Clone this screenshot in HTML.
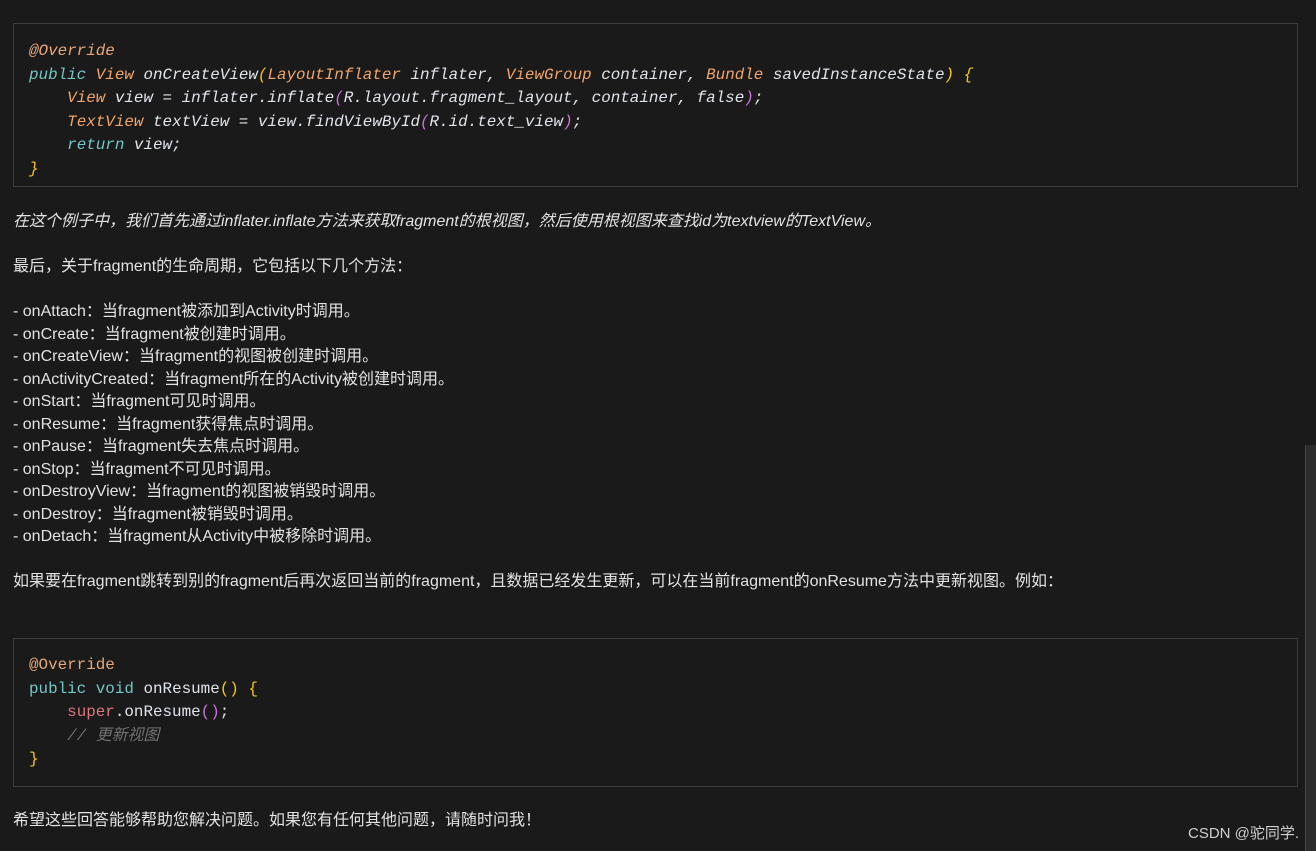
<!DOCTYPE html>
<html><head><meta charset="utf-8"><style>
html,body{margin:0;padding:0;background:#1a1a1a;width:1316px;height:851px;overflow:hidden;position:relative}
.code{position:absolute;left:13px;width:1285px;border:1px solid #3c3c3c;box-sizing:border-box;font-family:"Liberation Mono","Noto Sans CJK SC",monospace;font-size:15.9px;line-height:23.5px;color:#dfe3ea;white-space:pre;padding-left:15px}
.it{font-style:italic}
.k{color:#72c6c4}.t{color:#f0a46a}.y{color:#f6c51a}.p{color:#c873d8}.an{color:#e6a77a}.s{color:#d9757f}.c{color:#707070;font-style:italic}
.tx{position:absolute;left:13px;font-family:"Liberation Sans","Noto Sans CJK SC",sans-serif;font-size:16px;color:#e2e2e2;white-space:pre;line-height:22.5px}
.sb{position:absolute;left:1305px;top:445px;width:11px;height:406px;background:#2c2c2c;border-left:1px solid #444}
</style></head><body>
<div class="code it" style="top:23px;height:164px;padding-top:16px"><span class="an">@Override</span>
<span class="k">public</span> <span class="t">View</span> onCreateView<span class="y">(</span><span class="t">LayoutInflater</span> inflater, <span class="t">ViewGroup</span> container, <span class="t">Bundle</span> savedInstanceState<span class="y">)</span> <span class="y">{</span>
    <span class="t">View</span> view = inflater.inflate<span class="p">(</span>R.layout.fragment_layout, container, false<span class="p">)</span>;
    <span class="t">TextView</span> textView = view.findViewById<span class="p">(</span>R.id.text_view<span class="p">)</span>;
    <span class="k">return</span> view;
<span class="y">}</span></div>
<div class="tx" style="top:211px;font-style:italic">在这个例子中，我们首先通过inflater.inflate方法来获取fragment的根视图，然后使用根视图来查找id为textview的TextView。</div>
<div class="tx" style="top:256px">最后，关于fragment的生命周期，它包括以下几个方法：</div>
<div class="tx" style="top:301px">- onAttach：当fragment被添加到Activity时调用。
- onCreate：当fragment被创建时调用。
- onCreateView：当fragment的视图被创建时调用。
- onActivityCreated：当fragment所在的Activity被创建时调用。
- onStart：当fragment可见时调用。
- onResume：当fragment获得焦点时调用。
- onPause：当fragment失去焦点时调用。
- onStop：当fragment不可见时调用。
- onDestroyView：当fragment的视图被销毁时调用。
- onDestroy：当fragment被销毁时调用。
- onDetach：当fragment从Activity中被移除时调用。</div>
<div class="tx" style="top:571px">如果要在fragment跳转到别的fragment后再次返回当前的fragment，且数据已经发生更新，可以在当前fragment的onResume方法中更新视图。例如：</div>
<div class="code" style="top:638px;height:149px;padding-top:15px"><span class="an">@Override</span>
<span class="k">public</span> <span class="k">void</span> onResume<span class="y">()</span> <span class="y">{</span>
    <span class="s">super</span>.onResume<span class="p">()</span>;
    <span class="c">// 更新视图</span>
<span class="y">}</span></div>
<div class="tx" style="top:810px">希望这些回答能够帮助您解决问题。如果您有任何其他问题，请随时问我！</div>
<div class="sb"></div>
<div style="position:absolute;left:1188px;top:822px;font-family:'Liberation Sans','Noto Sans CJK SC',sans-serif;font-size:15px;color:#cfcfcf">CSDN @驼同学.</div>
</body></html>
